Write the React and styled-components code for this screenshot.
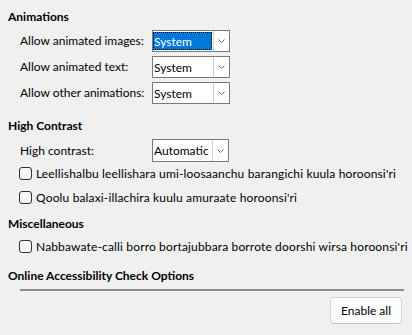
import React from "react";
import styled, { createGlobalStyle } from "styled-components";

const Global = createGlobalStyle`
  html, body { margin: 0; padding: 0; background: #f0f0f0; }
  body { font-family: "Lato", "Liberation Sans", sans-serif; font-size: 12px; color: #000; }
`;

const Page = styled.div`
  width: 412px;
  height: 335px;
  box-sizing: border-box;
  padding: 8px 8px 0 8px;
  display: flex;
  flex-direction: column;
`;

const Heading = styled.div`
  font-weight: 700;
  line-height: 18px;
  height: 18px;
  white-space: nowrap;
  margin-top: ${(p) => p.$mt || 0}px;
`;

const Grid = styled.div`
  display: grid;
  grid-template-columns: 132px auto;
  row-gap: 4px;
  padding-left: 12px;
  margin-top: ${(p) => p.$mt || 0}px;
  align-items: center;
  justify-content: start;
`;

const Label = styled.div`
  line-height: 16px;
  white-space: nowrap;
`;

const Combo = styled.div`
  display: flex;
  width: ${(p) => p.$w}px;
  height: ${(p) => p.$h || 22}px;
  box-sizing: border-box;
  border: 1px solid #7a7a7a;
  background: #fff;
`;

const Value = styled.div`
  flex: 1;
  display: flex;
  align-items: center;
  padding: 1px 1px 1px 0;
  min-width: 0;
`;

const ValueText = styled.span`
  flex: 1;
  align-self: stretch;
  display: flex;
  align-items: center;
  padding-left: 0;
  box-sizing: border-box;
  background: ${(p) => (p.$focused ? "#0078d7" : "transparent")};
  color: ${(p) => (p.$focused ? "#fff" : "#000")};
  border: 1px ${(p) => (p.$focused ? "dotted #000" : "solid transparent")};
  white-space: nowrap;
  overflow: hidden;
`;

const Arrow = styled.div`
  width: 16px;
  box-sizing: border-box;
  border-left: 1px solid #cfcfcf;
  display: flex;
  align-items: center;
  justify-content: center;
  flex: none;
`;

const Chevron = () => (
  <svg width="9" height="6" viewBox="0 0 9 6">
    <path d="M1.5 1.5 L4.5 4.5 L7.5 1.5" fill="none" stroke="#6a6a6a" strokeWidth="1" />
  </svg>
);

const Checks = styled.div`
  display: flex;
  flex-direction: column;
  padding-left: 11px;
`;

const CheckRow = styled.label`
  display: flex;
  align-items: center;
  height: 24px;
  gap: 4px;
  white-space: nowrap;
  letter-spacing: 0.15px;
  margin-top: ${(p) => p.$mt || 0}px;
`;

const Box = styled.span`
  width: 13px;
  height: 13px;
  box-sizing: border-box;
  border: 1px solid #333;
  border-radius: 3px;
  background: #f7f7f7;
  flex: none;
`;

const Rule = styled.div`
  height: 2px;
  background: #898c93;
  margin: 4px 0 0 12px;
`;

const Footer = styled.div`
  display: flex;
  justify-content: flex-end;
  padding-right: 2px;
  margin-top: 6px;
`;

const Button = styled.button`
  width: 72px;
  height: 27px;
  box-sizing: border-box;
  border: 1px solid #d3d3d3;
  border-bottom-color: #c4c4c4;
  border-radius: 4px;
  background: #fdfdfd;
  font: inherit;
  color: #000;
  padding: 0;
`;

const ComboBox = ({ value, w, h, focused }) => (
  <Combo $w={w} $h={h}>
    <Value>
      <ValueText $focused={focused}>{value}</ValueText>
    </Value>
    <Arrow>
      <Chevron />
    </Arrow>
  </Combo>
);

const CheckItem = ({ children, mt }) => (
  <CheckRow $mt={mt}>
    <Box />
    <span>{children}</span>
  </CheckRow>
);

export default function App() {
  return (
    <>
      <Global />
      <Page>
        <Heading>Animations</Heading>
        <Grid $mt={4}>
          <Label>Allow animated images:</Label>
          <ComboBox value="System" w={78} focused />
          <Label>Allow animated text:</Label>
          <ComboBox value="System" w={78} />
          <Label>Allow other animations:</Label>
          <ComboBox value="System" w={78} />
        </Grid>

        <Heading $mt={13}>High Contrast</Heading>
        <Grid $mt={4}>
          <Label>High contrast:</Label>
          <ComboBox value="Automatic" w={77} h={23} />
        </Grid>
        <Checks>
          <CheckItem mt={-1}>Leellishalbu leellishara umi-loosaanchu barangichi kuula horoonsi'ri</CheckItem>
          <CheckItem>Qoolu balaxi-illachira kuulu amuraate horoonsi'ri</CheckItem>
        </Checks>

        <Heading $mt={6}>Miscellaneous</Heading>
        <Checks>
          <CheckItem mt={1}>Nabbawate-calli borro bortajubbara borrote doorshi wirsa horoonsi'ri</CheckItem>
        </Checks>

        <Heading $mt={9}>Online Accessibility Check Options</Heading>
        <Rule />
        <Footer>
          <Button>Enable all</Button>
        </Footer>
      </Page>
    </>
  );
}
